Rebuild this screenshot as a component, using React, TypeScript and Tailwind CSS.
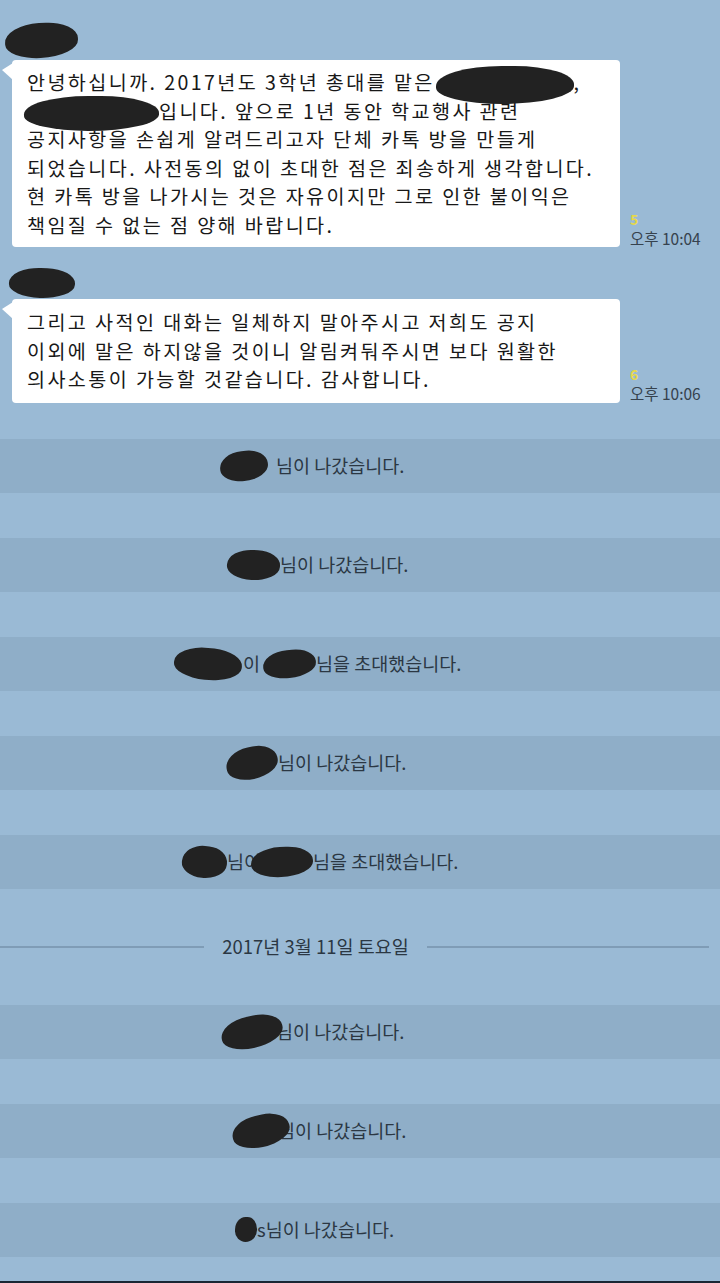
import React from "react";

type BlobProps = { w: number; h: number; className?: string };

// marker scribble used to hide names
function Blob({ w, h, className = "" }: BlobProps) {
  return (
    <span
      className={`relative z-10 inline-block shrink-0 bg-[#222222] rounded-[50%_45%_55%_50%/55%_50%_50%_45%] align-middle ${className}`}
      style={{ width: w, height: h }}
    />
  );
}

function Tail() {
  return (
    <svg className="absolute left-[-10px] top-[3px]" width="11" height="18" viewBox="0 0 11 18">
      <path d="M11 0 L0 7 L11 17 Z" fill="#ffffff" />
    </svg>
  );
}

function Meta({ count, time }: { count: string; time: string }) {
  return (
    <div className="flex flex-col ml-[10px] pb-[1px] leading-none">
      <span className="text-[14px] font-bold text-[#e6d84a] mb-[5px]">{count}</span>
      <span className="text-[15.5px] text-[#36424e] whitespace-nowrap">{time}</span>
    </div>
  );
}

function SysRow({ pl, children, first = false }: { pl: string; children: React.ReactNode; first?: boolean }) {
  return (
    <div className={`h-[54px] bg-[#8faec8] flex items-center text-[18.5px] text-[#2b3743] whitespace-nowrap ${pl} ${first ? "" : "mt-[45px]"}`}>
      {children}
    </div>
  );
}

const bubble =
  "relative ml-[12px] w-[608px] bg-white rounded-[4px] px-[15px] text-[19.6px] leading-[28.5px] text-[#181818] whitespace-nowrap tracking-[2.4px]";

export default function App() {
  return (
    <div className="w-[720px] h-[1283px] bg-[#9abad5] overflow-hidden flex flex-col font-['Noto_Sans_CJK_KR','Noto_Sans',sans-serif]">
      {/* message 1 */}
      <div className="pt-[23px]">
        <Blob w={73} h={35} className="ml-[5px] -rotate-3 block" />
        <div className="flex items-end mt-[2px]">
          <div className={`${bubble} py-[8px]`}>
            <Tail />
            안녕하십니까. 2017년도 3학년 총대를 맡은 <Blob w={138} h={38} className="-my-[10px] -ml-[6px]" />,
            <br />
            <Blob w={135} h={35} className="-my-[10px] -ml-[3px]" />입니다. 앞으로 1년 동안 학교행사 관련
            <br />
            공지사항을 손쉽게 알려드리고자 단체 카톡 방을 만들게
            <br />
            되었습니다. 사전동의 없이 초대한 점은 죄송하게 생각합니다.
            <br />
            현 카톡 방을 나가시는 것은 자유이지만 그로 인한 불이익은
            <br />
            책임질 수 없는 점 양해 바랍니다.
          </div>
          <Meta count="5" time="오후 10:04" />
        </div>
      </div>

      {/* message 2 */}
      <div className="pt-[21px]">
        <Blob w={66} h={30} className="ml-[9px] rotate-2 block" />
        <div className="flex items-end mt-[1px]">
          <div className={`${bubble} py-[9px]`}>
            <Tail />
            그리고 사적인 대화는 일체하지 말아주시고 저희도 공지
            <br />
            이외에 말은 하지않을 것이니 알림켜둬주시면 보다 원활한
            <br />
            의사소통이 가능할 것같습니다. 감사합니다.
          </div>
          <Meta count="6" time="오후 10:06" />
        </div>
      </div>

      {/* system messages */}
      <div className="mt-[36px]">
        <SysRow pl="pl-[220px]" first>
          <Blob w={48} h={30} className="-rotate-6" />
          <span className="ml-[8px]">님이 나갔습니다.</span>
        </SysRow>
        <SysRow pl="pl-[227px]">
          <Blob w={53} h={30} className="rotate-3" />
          <span>님이 나갔습니다.</span>
        </SysRow>
        <SysRow pl="pl-[174px]">
          <Blob w={68} h={32} className="rotate-6" />
          <span className="ml-[1px]">이 </span>
          <Blob w={53} h={28} className="-rotate-6 ml-[3px]" />
          <span>님을 초대했습니다.</span>
        </SysRow>
        <SysRow pl="pl-[226px]">
          <Blob w={52} h={32} className="-rotate-12" />
          <span>님이 나갔습니다.</span>
        </SysRow>
        <SysRow pl="pl-[182px]">
          <Blob w={45} h={32} className="rotate-6" />
          <span>님이</span>
          <Blob w={62} h={30} className="-rotate-3 -ml-[10px]" />
          <span>님을 초대했습니다.</span>
        </SysRow>
      </div>

      {/* date divider */}
      <div className="flex items-center h-[36px] mt-[40px] text-[18.5px] text-[#2b3743]">
        <div className="w-[204px] h-[2px] bg-[#7f9cb6]" />
        <span className="mx-auto whitespace-nowrap">2017년 3월 11일 토요일</span>
        <div className="w-[282px] h-[2px] bg-[#7f9cb6] mr-[11px]" />
      </div>

      <div className="mt-[40px]">
        <SysRow pl="pl-[221px]" first>
          <Blob w={62} h={32} className="-rotate-12" />
          <span className="-ml-[7px]">님이 나갔습니다.</span>
        </SysRow>
        <SysRow pl="pl-[232px]">
          <Blob w={58} h={32} className="-rotate-12" />
          <span className="-ml-[12px]">님이 나갔습니다.</span>
        </SysRow>
        <SysRow pl="pl-[235px]">
          <Blob w={22} h={25} />
          <span>s님이 나갔습니다.</span>
        </SysRow>
      </div>

      <div className="mt-auto h-[2px] bg-[#1a2634]" />
    </div>
  );
}
